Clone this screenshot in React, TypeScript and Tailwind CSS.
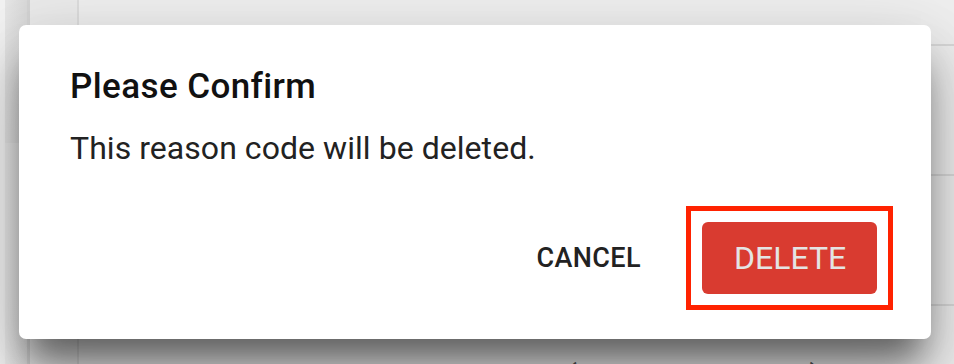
import React from "react";

export default function App() {
  return (
    <div
      className="relative w-[954px] h-[364px] overflow-hidden bg-[#efefef]"
      style={{ fontFamily: "Roboto, 'Noto Sans', sans-serif" }}
    >
      {/* page underneath */}
      <div className="flex h-full">
        <div className="w-[5px] bg-[#f3f3f3]" />
        <div className="w-[22px] flex flex-col">
          <div className="h-[143px] shrink-0 bg-gradient-to-r from-[#e6e6e6] to-[#dadada]" />
          <div className="flex-1 bg-gradient-to-r from-[#ececec] to-[#e2e2e2]" />
        </div>
        <div className="w-[3px] bg-[#d4d4d4]" />
        <div className="w-[47px] bg-[#ebebeb]" />
        <div className="flex-1 flex flex-col border-l-2 border-[#dddddd] bg-[#efefef]">
          <div className="h-[46px] shrink-0 border-b-2 border-[#d9d9d9]" />
          <div className="h-[130px] shrink-0 border-b-2 border-[#d9d9d9]" />
          <div className="h-[130px] shrink-0 border-b-2 border-[#d9d9d9]" />
          <div className="flex shrink-0 pt-[50px] text-[32px] leading-[40px] text-[#555]">
            <span className="ml-[33px] w-[454px]">Scheduling Type</span>
            <span>(Scheduling Type)</span>
          </div>
        </div>
      </div>

      {/* dialog */}
      <div className="absolute left-[19px] top-[25px] w-[912px] h-[314px] rounded-[7px] bg-white shadow-[0_30px_34px_-10px_rgba(0,0,0,0.5),0_40px_70px_4px_rgba(0,0,0,0.16),0_16px_80px_14px_rgba(0,0,0,0.08)] flex flex-col pt-[42px] pl-[51px] pr-[38px]">
        <h2 className="text-[35px] leading-[40px] font-medium tracking-[0.4px] text-[#111]">Please Confirm</h2>
        <p className="mt-[21px] text-[32px] leading-[40px] tracking-[0.05px] text-[#222]">This reason code will be deleted.</p>
        <div className="mt-[38px] flex justify-end items-center">
          <span className="mr-[45px] text-[27px] font-medium tracking-[0.4px] text-[#222] leading-[32px]">CANCEL</span>
          <div className="border-[5px] border-[#ff2200] p-[11px]">
            <div className="w-[175px] h-[72px] rounded-[6px] bg-[#d93b30] flex items-center pl-[32px] text-[32px] leading-[40px] text-[#e4e4e4]">
              DELETE
            </div>
          </div>
        </div>
      </div>
    </div>
  );
}
